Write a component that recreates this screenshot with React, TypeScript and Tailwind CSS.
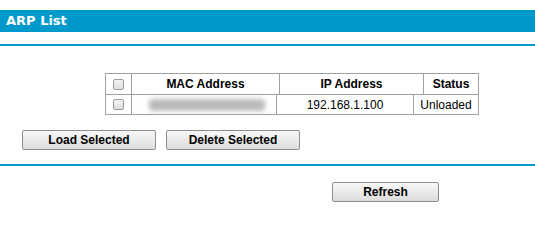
import React from "react";

function Check() {
  return (
    <span className="inline-block w-[11px] h-[11px] rounded-[2px] border border-[#9a9a9a] bg-gradient-to-b from-[#f4f4f4] to-[#dedede]" />
  );
}

function Btn({ label, w }: { label: string; w: string }) {
  return (
    <button
      className={`${w} h-[20px] border border-[#8e8e8e] rounded-[2px] bg-gradient-to-b from-[#f8f8f8] to-[#dcdcdc] text-[12px] font-bold text-black leading-none flex items-center justify-center`}
      style={{ fontFamily: '"Liberation Sans", Arial, sans-serif' }}
    >
      {label}
    </button>
  );
}

export default function App() {
  return (
    <div
      className="w-[535px] h-[217px] bg-white overflow-hidden"
      style={{ fontFamily: '"Liberation Sans", Arial, sans-serif' }}
    >
      <div className="h-[10px]" />
      <div className="h-[22px] bg-[#0099cc] flex items-center pl-[6px]">
        <span
          className="text-white text-[13px] font-bold"
          style={{ fontFamily: '"DejaVu Sans", Verdana, sans-serif' }}
        >
          ARP List
        </span>
      </div>
      <div className="h-[12px]" />
      <div className="h-[2px] bg-[#0099cc]" />
      <div className="h-[27px]" />
      <div className="ml-[105px] w-[374px] border border-[#a0a0a0] text-[12px] text-black">
        <div className="flex h-[20px] font-bold">
          <div className="w-[25px] flex items-center justify-center">
            <Check />
          </div>
          <div className="w-[148px] border-l border-[#a0a0a0] flex items-center justify-center">
            MAC Address
          </div>
          <div className="w-[144px] border-l border-[#a0a0a0] flex items-center justify-center">
            IP Address
          </div>
          <div className="w-[55px] border-l border-[#a0a0a0] flex items-center justify-center">
            Status
          </div>
        </div>
        <div className="flex h-[20px] border-t border-[#a0a0a0]">
          <div className="w-[25px] flex items-center justify-center">
            <Check />
          </div>
          <div className="w-[145px] border-l border-[#a0a0a0] flex items-center justify-center">
            <div className="w-[116px] h-[12px] ml-[6px] rounded-[4px] bg-[#bababa] blur-[2.5px]" />
          </div>
          <div className="w-[137px] border-l border-[#a0a0a0] flex items-center justify-center">
            192.168.1.100
          </div>
          <div className="w-[65px] border-l border-[#a0a0a0] flex items-center justify-center">
            Unloaded
          </div>
        </div>
      </div>
      <div className="h-[15px]" />
      <div className="flex gap-[10px] ml-[22px]">
        <Btn label="Load Selected" w="w-[134px]" />
        <Btn label="Delete Selected" w="w-[134px]" />
      </div>
      <div className="h-[14px]" />
      <div className="h-[2px] bg-[#0099cc]" />
      <div className="h-[16px]" />
      <div className="flex ml-[332px]">
        <Btn label="Refresh" w="w-[107px]" />
      </div>
    </div>
  );
}
